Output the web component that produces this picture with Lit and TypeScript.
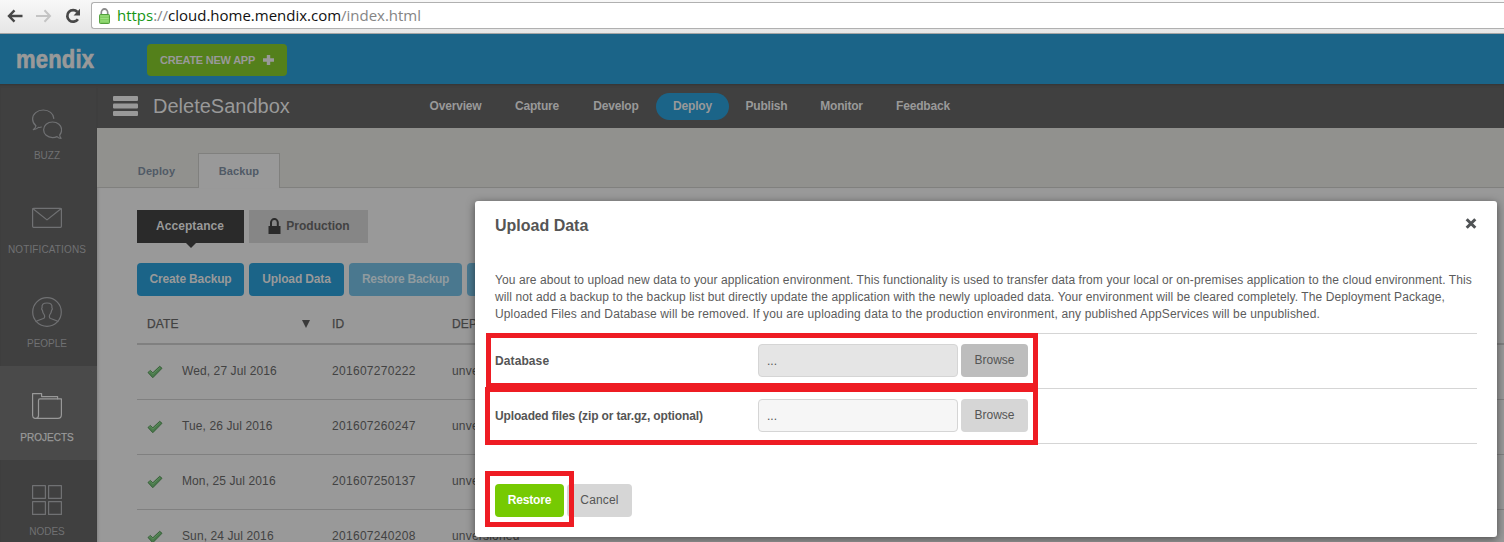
import { LitElement, html, svg, css } from "lit";
import { customElement } from "lit/decorators.js";
import { styleMap } from "lit/directives/style-map.js";

const stroke = (body: unknown) => html`<svg class="side-icon" viewBox="0 0 30 30" width="30" height="30" fill="none" stroke="currentColor" stroke-width="1.2" stroke-linejoin="round" stroke-linecap="round">${body}</svg>`;

const sideItems = [
  { label: "BUZZ", icon: svg`<path d="M21.8 9.400C21.500 4.600 17 1 11.300 1 5.300 1 .6 5 .6 10c0 3 1.500 5.200 3.300 6.800-.3 1.600-1.400 3-2.600 3.900 2.200-.3 4.100-1.200 5.200-2.300 1 .2 1.900.2 2.800-.3"/><path d="M20.500 13c-5 0-8.900 3.500-8.900 7.800s3.900 7.800 8.900 7.800c1.700 0 3.200-.3 4.500-1 1.100 1.100 2.400 1.700 4.100 1.700-.8-1-1.400-2.100-1.400-3.300 1.200-1.400 1.900-3.200 1.900-5.200 0-4.300-4-7.800-9.100-7.800z"/>` },
  { label: "NOTIFICATIONS", wide: true, icon: svg`<rect x=".6" y="5.300" width="28.800" height="19" rx="1"/><path d="M1 5.700l14 11.200L29 5.700"/>` },
  { label: "PEOPLE", icon: svg`<circle cx="15" cy="15" r="14.300"/><path d="M4 24.500c1.800-1.300 4.700-2 7.500-3 1.500-.6 1.300-2.800.7-3.800-1.400-1.500-1.600-3-1.800-4.400-1-.8-.8-2.200-.3-2.500C9.600 7.500 11.200 6 15 6s5.400 1.500 4.900 4.800c.5.3.7 1.700-.3 2.500-.2 1.400-.4 2.900-1.800 4.400-.6 1-.8 3.200.7 3.800 2.800 1 5.700 1.700 7.500 3"/>` },
  { label: "PROJECTS", active: true, icon: svg`<path d="M2.800 27.400C1.500 27 .6 26.200.6 24.500V2.600h9v3h16v2.200"/><path d="M6.500 24.500V9.500c0-1.300.5-1.700 1.500-1.700h21.400v16c0 2.200-1.400 3.600-3.500 3.600H3.500c2 0 3-1.200 3-2.900z"/>` },
  { label: "NODES", icon: svg`<rect x=".6" y=".6" width="12.800" height="12.800"/><rect x="16.600" y=".6" width="12.800" height="12.800"/><rect x=".6" y="16.600" width="12.800" height="12.800"/><rect x="16.600" y="16.600" width="12.800" height="12.800"/>` },
];

const navItems = [
  { label: "Overview", w: 85 },
  { label: "Capture", w: 78 },
  { label: "Develop", w: 80 },
  { label: "Deploy", w: 73, active: true },
  { label: "Publish", w: 75 },
  { label: "Monitor", w: 75 },
  { label: "Feedback", w: 88 },
];

const actions = [
  { label: "Create Backup", w: 107 },
  { label: "Upload Data", w: 95 },
  { label: "Restore Backup", w: 113, off: true },
  { label: "Delete Backup", w: 107, off: true },
];

const rows = [
  ["Wed, 27 Jul 2016", "201607270222"],
  ["Tue, 26 Jul 2016", "201607260247"],
  ["Mon, 25 Jul 2016", "201607250137"],
  ["Sun, 24 Jul 2016", "201607240208"],
];

@customElement("app-root")
export class AppRoot extends LitElement {
  static styles = css`
    :host { display: block; position: relative; width: 1504px; height: 542px; overflow: hidden; background: #999; font-family: "Liberation Sans", Arial, sans-serif; font-size: 12px; color: #424242; }
    * { box-sizing: border-box; }
    svg { display: block; flex: none; }
    .chrome { height: 34px; display: flex; align-items: flex-start; background: linear-gradient(#f8f8f8, #e6e6e6); border-bottom: 1px solid #a5a5a5; }
    .tools { width: 91px; height: 31px; padding-left: 7px; display: flex; gap: 13px; align-items: center; }
    .address { flex: 1; height: 27px; margin-top: 2px; border: 1px solid #b0b0b0; border-right: 0; border-radius: 3px 0 0 3px; background: #fff; display: flex; align-items: center; padding-left: 7px; }
    .url { margin: 0 0 2px 7px; font: 15px/20px "Open Sans", "Noto Sans", sans-serif; color: #858585; white-space: nowrap; letter-spacing: -0.01px; }
    .secure { color: #159615; }
    .host { color: #111; }
    .top { height: 50px; background: #1b6488; display: flex; align-items: center; padding-left: 16px; }
    .logo { width: 131px; color: #999; font: bold 25px/30px "Liberation Sans", sans-serif; }
    .logo-text { display: inline-block; transform: scaleX(.88); transform-origin: 0 50%; letter-spacing: .2px; -webkit-text-stroke: .7px #999; }
    .create { width: 140px; height: 32px; margin-top: 2px; border-radius: 4px; background: #54801b; color: #999; font-weight: bold; font-size: 11px; display: flex; align-items: center; padding-left: 13px; gap: 8px; letter-spacing: -.24px; white-space: nowrap; }
    .body { display: flex; height: 458px; }
    .side { width: 97px; flex: none; background: #404040; box-shadow: inset 0 3px 3px -2px #333; overflow: hidden; }
    .side-item { height: 94px; display: flex; flex-direction: column; align-items: center; padding: 25px 3px 0 0; color: #707173; }
    .side-item.active { background: #4a4a4a; color: #999; }
    .side-label { margin-top: 10px; font-size: 10px; line-height: 14px; white-space: nowrap; }
    .side-label.wide { letter-spacing: .12px; }
    .side-item.active .side-label { -webkit-text-stroke: .25px #999; }
    .main { flex: 1; min-width: 0; }
    .nav { height: 44px; background: #404040; box-shadow: inset 0 3px 3px -2px #333; display: flex; align-items: center; padding-left: 16px; color: #999; }
    .project { width: 260px; margin-left: 14px; font-size: 20px; line-height: 24px; }
    .menu-wrap { width: 26px; }
    .nav-item { height: 27px; border-radius: 14px; display: flex; align-items: center; justify-content: center; font-weight: bold; letter-spacing: -.2px; padding-bottom: 1px; }
    .nav-item.active { background: #1b6488; }
    .tabs { height: 60px; background: #91918e; border-bottom: 1px solid #80807e; display: flex; align-items: flex-end; font-size: 11px; font-weight: bold; color: #505a66; letter-spacing: .1px; }
    .tab { height: 34px; display: flex; align-items: center; justify-content: center; }
    .tab.idle { width: 101px; padding: 1px 0 0 18px; }
    .tab.active { width: 82px; height: 35px; margin-bottom: -1px; background: #999; border: 1px solid #80807e; border-bottom: 0; }
    .content { padding: 22px 0 0 40px; box-shadow: inset 3px 0 3px -2px #838383; height: 354px; }
    .row { display: flex; gap: 5px; font-weight: bold; }
    .env { height: 33px; display: flex; align-items: center; justify-content: center; background: #868686; color: #424242; width: 119px; gap: 5px; padding: 0 0 2px 1px; position: relative; }
    .env.active { width: 107px; background: #2a2a2a; color: #999; padding: 0 1px 2px 0; letter-spacing: .08px; }
    .env.active::after { content: ""; position: absolute; left: 49px; top: 33px; border: 5px solid transparent; border-top-color: #2a2a2a; border-bottom: 0; }
    .actions { margin-top: 20px; }
    .action { height: 33px; border-radius: 4px; background: #1b6488; color: #999; display: flex; align-items: center; justify-content: center; white-space: nowrap; letter-spacing: -.15px; padding-bottom: 2px; }
    .action.off { background: #4a788f; color: #909b9f; letter-spacing: -.3px; }
    .thead, .tr { display: grid; grid-template-columns: 35px 150px 120px 1fr; padding-left: 10px; align-items: center; }
    .thead { height: 49px; padding-top: 8px; border-bottom: 2px solid #808080; -webkit-text-stroke: .25px #424242; letter-spacing: .15px; }
    .date-head { grid-column: 1 / 3; display: flex; justify-content: space-between; align-items: center; padding-right: 22px; }
    .tr { height: 55px; border-bottom: 1px solid #808080; letter-spacing: .1px; padding-bottom: 2px; }
    .check { margin-top: 2px; }
    .num { letter-spacing: .3px; }
    .ver { letter-spacing: .2px; }
    .modal { position: absolute; left: 475px; top: 201px; width: 1022px; height: 336px; border-radius: 3px; background: #fff; box-shadow: 0 2px 8px rgba(0,0,0,.5); padding: 13px 20px 0; color: #555; }
    .modal-head { display: flex; justify-content: space-between; height: 58px; }
    .modal-title { font-size: 16px; font-weight: bold; line-height: 23px; }
    .close { margin: 4px 0 0 0; }
    .copy { height: 61px; line-height: 17px; white-space: nowrap; color: #5c5c5c; }
    .line-a { letter-spacing: .09px; }
    .line-b { letter-spacing: .098px; }
    .line-c { letter-spacing: .138px; }
    .field { height: 55px; border-top: 1px solid #d5d5d5; display: flex; align-items: flex-start; padding-top: 10px; }
    .field.last { height: 56px; border-bottom: 1px solid #d5d5d5; }
    .field-label { width: 263px; font-weight: bold; line-height: 34px; letter-spacing: .1px; }
    .last .field-label { letter-spacing: -.14px; }
    .input { width: 200px; height: 33px; border: 1px solid #d5d5d5; border-radius: 4px; background: #f6f6f6; padding: 9px 8px; line-height: 15px; }
    .input.hot { background: #e5e5e5; }
    .btn { height: 33px; border-radius: 4px; background: #d6d6d6; display: flex; align-items: center; justify-content: center; padding-bottom: 1px; }
    .browse { margin-left: 3px; width: 67px; }
    .browse.hot { background: #bdbdbd; }
    .foot { display: flex; gap: 3px; margin-top: 40px; }
    .restore { width: 69px; background: #76ca02; color: #fff; font-weight: bold; letter-spacing: -.2px; }
    .cancel { width: 65px; letter-spacing: .15px; }
    .mark { position: absolute; border: 5px solid #ee1c23; }
    .mark-db { left: 486px; top: 333px; width: 552px; height: 55px; }
    .mark-files { left: 485px; top: 387px; width: 553px; height: 58px; }
    .mark-restore { left: 485px; top: 471px; width: 89px; height: 56px; }
  `;

  private check() {
    return html`<svg class="check" width="16" height="14" viewBox="0 0 16 14"><path d="M1 7.500L3.300 5.500 5.800 7.800 12.700 1.300 15 3.300 5.800 12.700z" fill="#4a7a4c" stroke="#365f38" stroke-width="1" stroke-linejoin="round"/><path d="M2 7.400l1.400-.9 2.400 2.500 7-6.500" fill="none" stroke="#62915f" stroke-width=".8"/></svg>`;
  }

  render() {
    return html`
      <div class="chrome">
        <div class="tools">
          <svg width="16" height="14" viewBox="0 0 16 14" fill="none" stroke="#474747" stroke-width="2.400"><path d="M7.500 1.300L2 7l5.500 5.700M2.500 7H15.500"/></svg>
          <svg width="16" height="14" viewBox="0 0 16 14" fill="none" stroke="#c4c4c4" stroke-width="2"><path d="M8.500 1.300L14 7l-5.500 5.700M13.500 7H0"/></svg>
          <svg width="16" height="16" viewBox="0 0 16 16"><path d="M12.900 11.200A5.800 5.800 0 1 1 12.400 4" fill="none" stroke="#474747" stroke-width="2.700"/><path d="M15 .8v6.700H8.600z" fill="#474747"/></svg>
        </div>
        <div class="address">
          <svg width="11" height="16" viewBox="0 0 12 16" preserveAspectRatio="none"><path d="M2.500 8V4.500a3.500 3.500 0 0 1 7 0V8" fill="none" stroke="#8b8b8b" stroke-width="1.800"/><rect x=".5" y="6.500" width="11" height="9" rx="1" fill="#83cf63" stroke="#4d9c38"/><path d="M1.500 8h9M1.500 10.500h9M1.500 13h9" stroke="#a6e38c" stroke-width=".8"/></svg>
          <div class="url"><span class="secure">https</span>://<span class="host">cloud.home.mendix.com</span>/index.html</div>
        </div>
      </div>
      <div class="top">
        <div class="logo"><span class="logo-text">mendix</span></div>
        <div class="create"><span>CREATE NEW APP</span><svg width="11" height="10" viewBox="0 0 11 10"><path d="M5.500 0v10M0 5h11" stroke="#999" stroke-width="3.400"/></svg></div>
      </div>
      <div class="body">
        <div class="side">
          ${sideItems.map(i => html`<div class="side-item ${i.active ? "active" : ""}">${stroke(i.icon)}<div class="side-label ${i.wide ? "wide" : ""}">${i.label}</div></div>`)}
        </div>
        <div class="main">
          <div class="nav">
            <div class="menu-wrap"><svg width="25" height="20" viewBox="0 0 25 20" fill="#999"><rect width="25" height="5" rx="1"/><rect y="7.500" width="25" height="5" rx="1"/><rect y="15" width="25" height="5" rx="1"/></svg></div>
            <div class="project">DeleteSandbox</div>
            ${navItems.map(n => html`<div class="nav-item ${n.active ? "active" : ""}" style=${styleMap({ width: n.w + "px" })}>${n.label}</div>`)}
          </div>
          <div class="tabs"><div class="tab idle">Deploy</div><div class="tab active">Backup</div></div>
          <div class="content">
            <div class="row">
              <div class="env active">Acceptance</div>
              <div class="env"><svg width="13" height="16" viewBox="0 0 13 16"><path d="M3 8V4.500a3.300 3.300 0 0 1 6.800 0V8" fill="none" stroke="#2a2a2a" stroke-width="2"/><rect x=".5" y="8" width="12" height="8" fill="#2a2a2a"/></svg>Production</div>
            </div>
            <div class="row actions">
              ${actions.map(a => html`<div class="action ${a.off ? "off" : ""}" style=${styleMap({ width: a.w + "px" })}>${a.label}</div>`)}
            </div>
            <div class="thead"><div class="date-head"><span>DATE</span><svg width="8" height="8" viewBox="0 0 8 8"><path d="M0 0h8L4 8z" fill="#3a3a3a"/></svg></div><span>ID</span><span>DEPLOYED</span></div>
            ${rows.map(r => html`<div class="tr">${this.check()}<span>${r[0]}</span><span class="num">${r[1]}</span><span class="ver">unversioned</span></div>`)}
          </div>
        </div>
      </div>
      <div class="modal">
        <div class="modal-head"><div class="modal-title">Upload Data</div><svg class="close" width="12" height="11" viewBox="0 0 12 11"><path d="M1.700 1.200l8.600 8.600M10.300 1.200l-8.600 8.600" stroke="#505355" stroke-width="3"/></svg></div>
        <div class="copy">
          <div class="line-a">You are about to upload new data to your application environment. This functionality is used to transfer data from your local or on-premises application to the cloud environment. This</div>
          <div class="line-b">will not add a backup to the backup list but directly update the application with the newly uploaded data. Your environment will be cleared completely. The Deployment Package,</div>
          <div class="line-c">Uploaded Files and Database will be removed. If you are uploading data to the production environment, any published AppServices will be unpublished.</div>
        </div>
        <div class="field"><div class="field-label">Database</div><div class="input hot">...</div><div class="btn browse hot">Browse</div></div>
        <div class="field last"><div class="field-label">Uploaded files (zip or tar.gz, optional)</div><div class="input">...</div><div class="btn browse">Browse</div></div>
        <div class="foot"><div class="btn restore">Restore</div><div class="btn cancel">Cancel</div></div>
      </div>
      <div class="mark mark-db"></div>
      <div class="mark mark-files"></div>
      <div class="mark mark-restore"></div>
    `;
  }
}
